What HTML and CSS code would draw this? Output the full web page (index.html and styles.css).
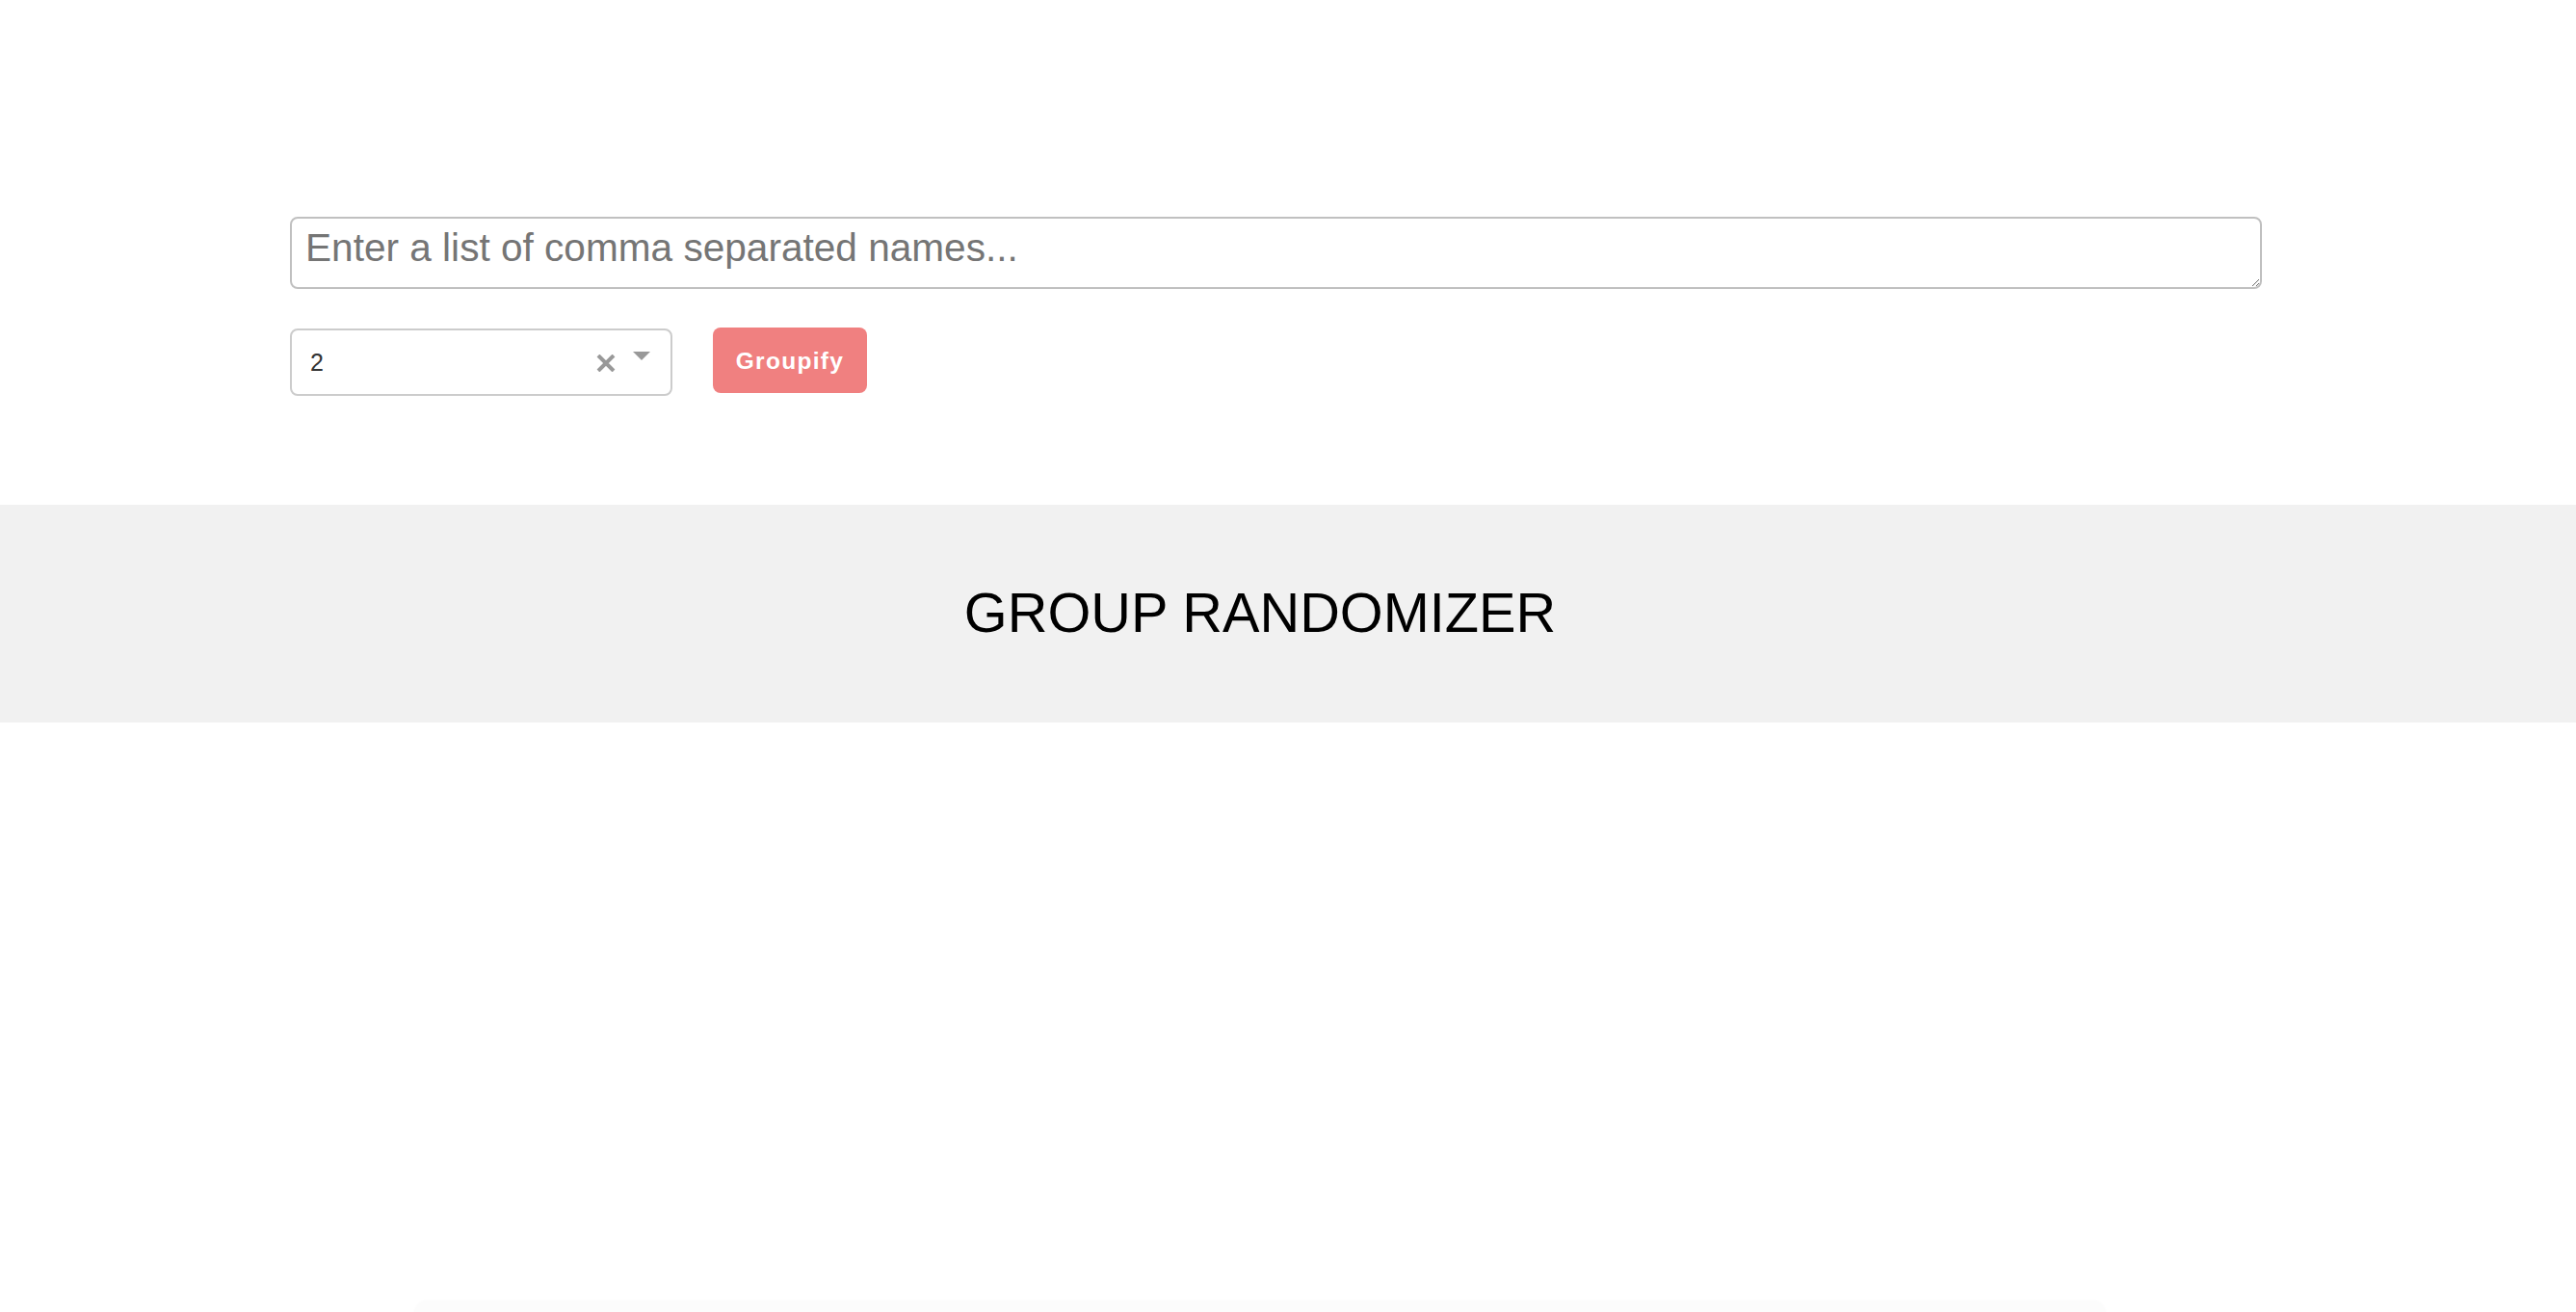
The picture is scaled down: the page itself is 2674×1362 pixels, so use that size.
FILE: index.html
```html
<!DOCTYPE html>
<html>
<head>
<meta charset="utf-8">
<link rel="stylesheet" href="styles.css">
</head>
<body>
  <section class="controls">
    <textarea class="names" placeholder="Enter a list of comma separated names..."></textarea>
    <div class="row">
      <div class="select">
        <span class="select-value">2</span>
        <span class="select-icons">
          <svg class="clear" width="20" height="18" viewBox="0 0 20 18"><path d="M2 1 L18 17 M18 1 L2 17" stroke="#999" stroke-width="4" fill="none"/></svg>
          <svg class="caret" width="20" height="10" viewBox="0 0 20 10"><path d="M1 0 L19 0 L10 9 Z" fill="#999"/></svg>
        </span>
      </div>
      <button class="groupify">Groupify</button>
    </div>
  </section>
  <header class="band">
    <h1 class="title">GROUP RANDOMIZER</h1>
  </header>
  <main class="results">
    <div class="card"></div>
  </main>
</body>
</html>
```
FILE: styles.css
```css
html, body {
  margin: 0;
  padding: 0;
  background: #ffffff;
  font-family: "Liberation Sans", Arial, sans-serif;
}

.controls {
  padding: 225px 0 0 301px;
  height: 299px;
  box-sizing: border-box;
}

.names {
  display: block;
  width: 2047px;
  height: 75px;
  box-sizing: border-box;
  border: 2px solid #c0c0c0;
  border-radius: 8px;
  padding: 7px 14px;
  margin: 0;
  font-family: "Liberation Sans", Arial, sans-serif;
  font-size: 40.6px;
  color: #333;
  background: #fff;
  outline: none;
}

.names::placeholder {
  color: #757575;
}

.row {
  display: flex;
  align-items: flex-start;
  gap: 42px;
  margin-top: 41px;
}

.select {
  width: 397px;
  height: 70px;
  box-sizing: border-box;
  border: 2px solid #cccccc;
  border-radius: 8px;
  display: flex;
  align-items: center;
  justify-content: space-between;
  padding: 0 20px 0 19px;
  background: #fff;
}

.select-value {
  font-size: 25px;
  color: #333;
  margin-top: 1px;
}

.select-icons {
  display: flex;
  align-items: flex-start;
  gap: 17px;
  height: 20px;
}

.clear {
  display: block;
  margin-top: 2px;
}

.caret {
  display: block;
  margin-top: -1px;
}

.groupify {
  width: 160px;
  height: 68px;
  margin-top: -1px;
  border: none;
  border-radius: 8px;
  background: #f08080;
  color: #fff;
  font-family: "Liberation Sans", Arial, sans-serif;
  font-weight: bold;
  font-size: 24.5px;
  letter-spacing: 1.3px;
  padding: 2px 0 0 0;
}

.band {
  background: #f1f1f1;
  height: 226px;
  margin-top: 225px;
  display: flex;
  align-items: center;
  justify-content: center;
  padding-right: 58px;
}

.title {
  margin: 0;
  font-weight: normal;
  font-size: 57.7px;
  color: #000;
  letter-spacing: 0;
  margin-top: -2px;
}

.results {
  background: #ffffff;
  height: 612px;
  overflow: hidden;
}

.card {
  margin: 600px 0 0 430px;
  width: 1756px;
  height: 40px;
  background: #fcfcfc;
  border-radius: 14px;
  box-shadow: 0 0 3px rgba(0, 0, 0, 0.02);
}
```
